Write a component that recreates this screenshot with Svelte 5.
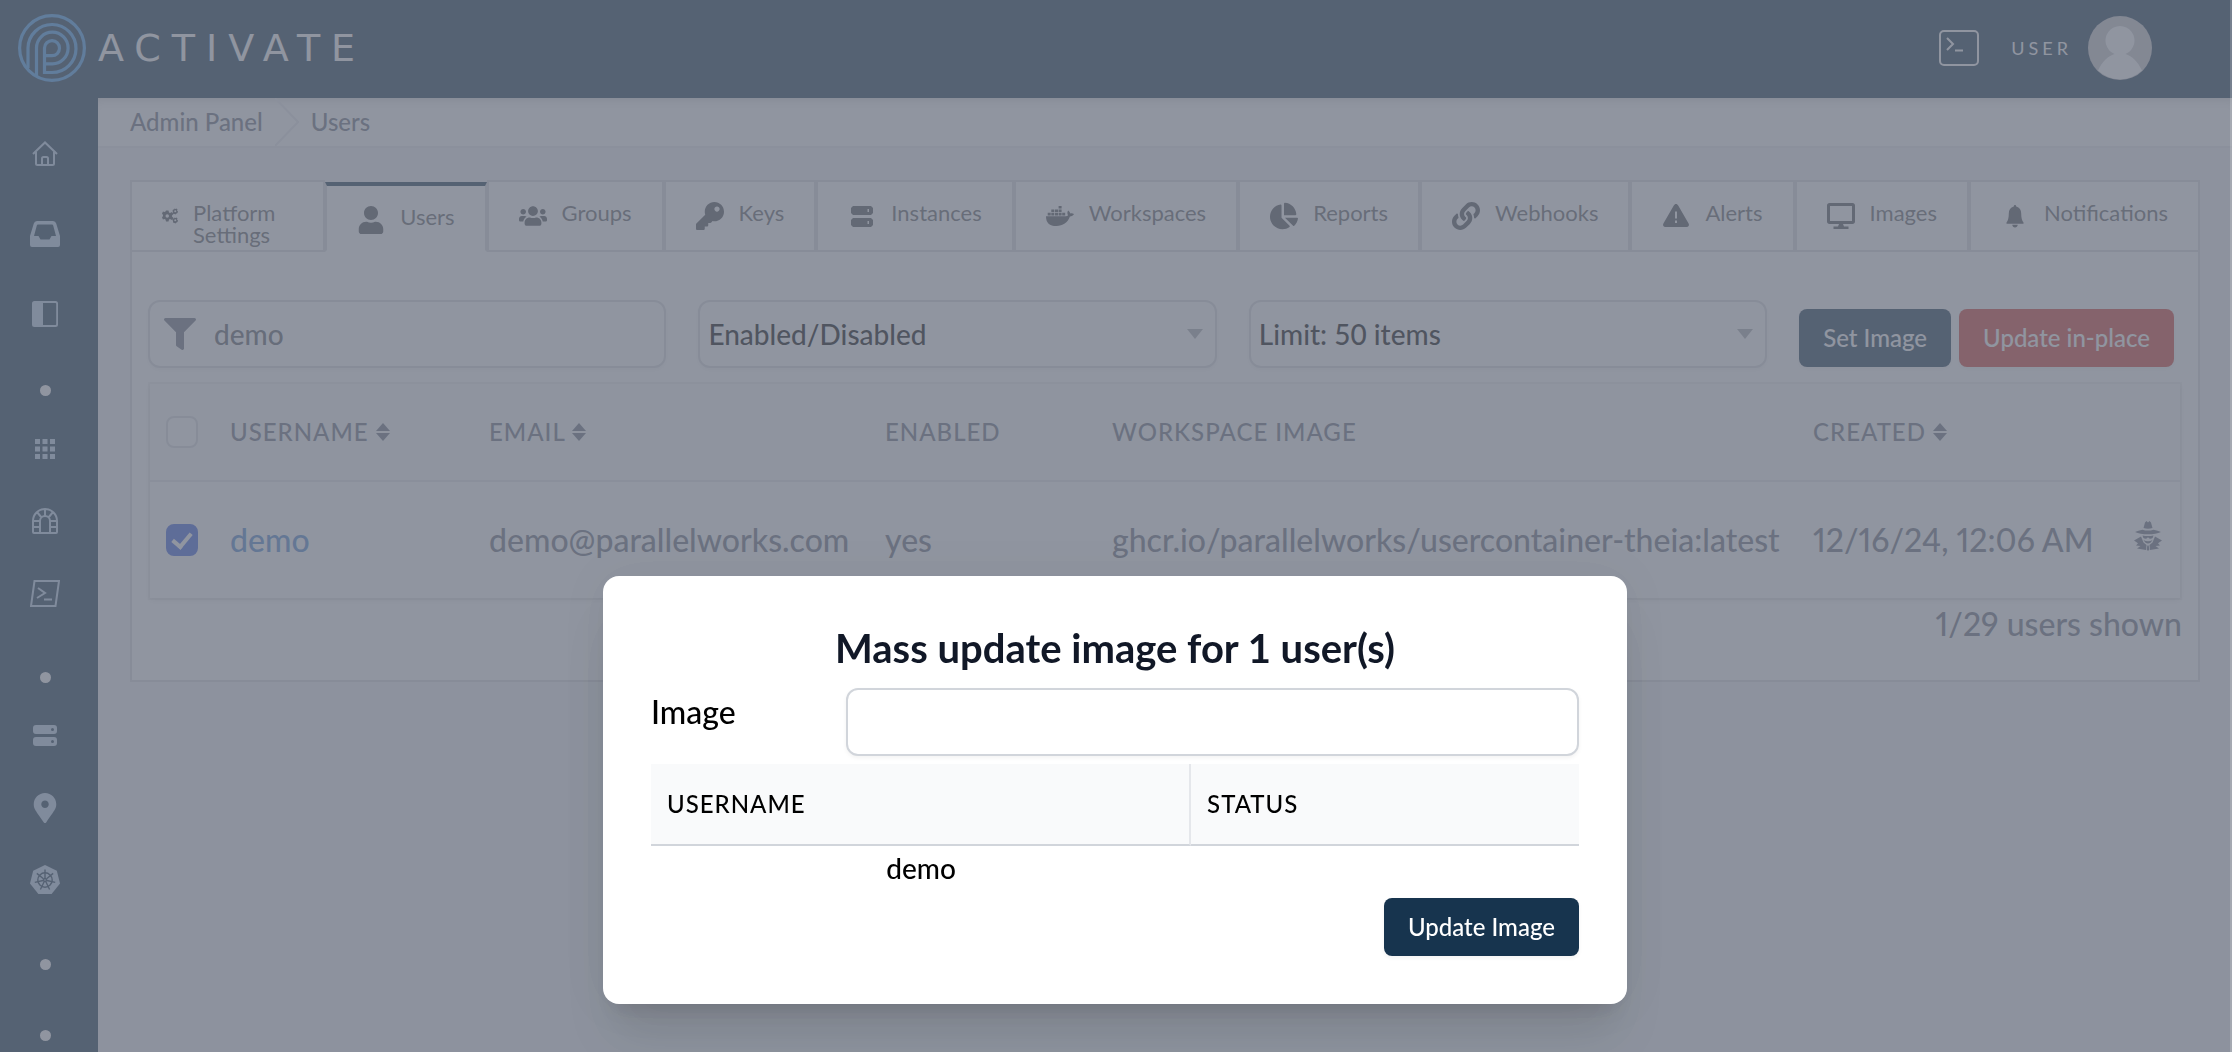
<script lang="ts">
	type Tab = {
		id: string;
		label: string;
		viewBox: string;
		path: string;
	};

	type User = {
		username: string;
		email: string;
		enabled: boolean;
		image: string;
		created: string;
		selected: boolean;
	};

	const tabs: Tab[] = [
		{
			id: 'platform',
			label: 'Platform Settings',
			viewBox: '0 0 32 32',
			path: 'M8 5h5l1 4 2 1 4-2 3 4-3 3v2l3 3-3 4-4-2-2 1-1 4H8l-1-4-2-1-3 1-2-4 2-3v-2l-2-3 2-4 3 1 2-1zM10.500 12.500a3.500 3.500 0 1 0 0 7 3.500 3.500 0 0 0 0-7zM25 1l2 1 2-1 2 2-1 2 2 2-1 3-2 1-2 2-2-1-3-1V8l-1-2 1-3h2zM26.500 4.500a2 2 0 1 0 0 4 2 2 0 0 0 0-4zM25 19l2 1 2-1 2 2-1 2 2 2-1 3-2 1-2 2-2-1-3-1v-3l-1-2 1-3h2zM26.500 22.500a2 2 0 1 0 0 4 2 2 0 0 0 0-4z'
		},
		{
			id: 'users',
			label: 'Users',
			viewBox: '0 0 448 512',
			path: 'M224 256c70.7 0 128-57.3 128-128S294.7 0 224 0 96 57.3 96 128s57.3 128 128 128zm89.6 32h-16.7c-22.2 10.2-46.9 16-72.9 16s-50.6-5.8-72.9-16h-16.7C60.2 288 0 348.2 0 422.4V464c0 26.5 21.5 48 48 48h352c26.5 0 48-21.5 48-48v-41.6c0-74.2-60.2-134.4-134.4-134.4z'
		},
		{
			id: 'groups',
			label: 'Groups',
			viewBox: '0 0 640 512',
			path: 'M96 224c35.3 0 64-28.7 64-64s-28.7-64-64-64-64 28.7-64 64 28.7 64 64 64zm448 0c35.3 0 64-28.7 64-64s-28.7-64-64-64-64 28.7-64 64 28.7 64 64 64zm32 32h-64c-17.6 0-33.5 7.1-45.1 18.6 40.3 22.1 68.9 62 75.1 109.4h66c17.700 0 32-14.300 32-32v-32c0-35.300-28.700-64-64-64zm-256 0c61.900 0 112-50.100 112-112S381.900 32 320 32 208 82.100 208 144s50.100 112 112 112zm76.800 32h-8.300c-20.800 10-43.900 16-68.500 16s-47.600-6-68.500-16h-8.300C179.600 288 128 339.600 128 403.200V432c0 26.500 21.500 48 48 48h288c26.500 0 48-21.500 48-48v-28.800c0-63.600-51.600-115.200-115.200-115.200zm-223.700-13.400C161.500 263.100 145.600 256 128 256H64c-35.300 0-64 28.700-64 64v32c0 17.700 14.300 32 32 32h65.900c6.300-47.400 34.900-87.300 75.200-109.400z'
		},
		{
			id: 'keys',
			label: 'Keys',
			viewBox: '0 0 512 512',
			path: 'M512 176c0 97.200-78.800 176-176 176-11.220 0-22.190-1.060-32.830-3.070l-24.010 27.010A24 24 0 0 1 261.220 384H224v40c0 13.250-10.750 24-24 24h-40v40c0 13.250-10.750 24-24 24H24c-13.250 0-24-10.750-24-24v-78.060c0-6.360 2.530-12.470 7.030-16.970l161.800-161.800C163.100 213.800 160 195.270 160 176 160 78.800 238.800 0 336 0c97.490 0 176 78.510 176 176zM336 128c0 26.510 21.490 48 48 48s48-21.490 48-48-21.490-48-48-48-48 21.490-48 48z'
		},
		{
			id: 'instances',
			label: 'Instances',
			viewBox: '0 0 28 28',
			path: 'M5 4h18l2 2v5l-2 2H5l-2-2V6zM19.500 7h1.500v3h-1.500zM5 16h18l2 2v5l-2 2H5l-2-2v-5zM19.500 19h1.500v3h-1.500z'
		},
		{
			id: 'workspaces',
			label: 'Workspaces',
			viewBox: '0 0 28 28',
			path: 'M12.600 4h3v2.600h-3zM5.300 7.400h3V10h-3zM9 7.400h3V10H9zM12.600 7.400h3V10h-3zM1.700 10.800h3v2.600h-3zM5.300 10.800h3v2.600h-3zM9 10.800h3v2.600H9zM12.600 10.800h3v2.600h-3zM16.200 10.800h3v2.600h-3zM0 14.200h19c1.500 0 2.500-.4 3-1-.9-1.500-.8-3.300.2-4.700 1.200.8 1.900 1.900 2 3 1.300-.3 2.700-.1 3.800.6-.8 1.600-2.200 2.500-4.100 2.500C21.600 21 16.900 24 10.500 24 3.500 24 0 21 0 14.200z'
		},
		{
			id: 'reports',
			label: 'Reports',
			viewBox: '0 0 544 512',
			path: 'M527.800 288H290.500l158 158c6 6 16 6.500 22.200.7 38.700-36.500 65.300-85.600 73.100-140.900 1.400-9.400-6.500-17.800-16-17.800zm-15.800-64.800C503.700 103.700 408.300 8.300 288.800 0 279.700-.6 272 7.100 272 16.200V240h223.800c9.100 0 16.800-7.700 16.200-16.800zM224 288V50.700c0-9.500-8.400-17.400-17.800-16C87 51.500-4.100 155.600.1 280.400 4.500 408.500 114.800 513.600 243 512c50.400-.6 97-16.900 135.300-44 7.900-5.600 8.400-17.300 1.600-24.100L224 288z'
		},
		{
			id: 'webhooks',
			label: 'Webhooks',
			viewBox: '0 0 512 512',
			path: 'M326.600 185.400c59.800 59.800 59 155.700.4 214.600l-67.600 67.600c-59.200 59.200-155.600 59.200-214.900 0-59.300-59.300-59.300-155.700 0-215l37.100-37.100c9.800-9.800 26.800-3.300 27.300 10.600.6 17.700 3.800 35.500 9.700 52.700 2 5.800.6 12.300-3.800 16.600l-13.100 13.100c-28 28-28.900 73.700-1.100 102 28 28.600 74 28.700 102.300.5l67.200-67.200c28.200-28.200 28-73.800 0-101.800-3.700-3.700-7.400-6.600-10.300-8.600a16 16 0 0 1-7-12.600c-.4-10.600 3.400-21.500 11.700-29.800l21.100-21.100c5.500-5.500 14.200-6.200 20.600-1.700 7.200 5 14.100 10.800 20.400 17.200zM467.500 44.400c-59.200-59.200-155.600-59.200-214.900 0L185 112c-58.600 58.900-59.400 154.800.4 214.600 6.300 6.400 13.200 12.200 20.500 17.200 6.400 4.500 15.100 3.800 20.600-1.700l21-21.100c8.400-8.300 12.100-19.200 11.700-29.800a16 16 0 0 0-6.900-12.600c-2.900-2-6.700-4.900-10.400-8.600-28-28-28.200-73.600 0-101.800l67.200-67.200c28.300-28.200 74.300-28 102.400.5 27.700 28.300 26.900 74-1.200 102l-13 13.100c-4.400 4.300-5.800 10.800-3.800 16.600 5.800 17.200 9 35 9.700 52.700.5 13.900 17.400 20.400 27.300 10.600l37-37.100c59.300-59.300 59.300-155.700 0-215z'
		},
		{
			id: 'alerts',
			label: 'Alerts',
			viewBox: '0 0 28 28',
			path: 'M14 2c1 0 1.700.6 2.200 1.500l10.400 18c1 1.900-.2 3.500-2.100 3.500h-21c-1.900 0-3.100-1.600-2.100-3.500l10.400-18C12.300 2.600 13 2 14 2zM13 9.500v7h2v-7zM13 18.500v2.500h2v-2.500z'
		},
		{
			id: 'images',
			label: 'Images',
			viewBox: '0 0 28 28',
			path: 'M2.500 1h23C27 1 28 2 28 3.500v16c0 1.500-1 2.500-2.500 2.500h-23C1 22 0 21 0 19.500v-16C0 2 1 1 2.500 1zM3 4v15h22V4zM12 22h4l1 2.500h4.500V27h-15v-2.500H11z'
		},
		{
			id: 'notifications',
			label: 'Notifications',
			viewBox: '0 0 28 28',
			path: 'M14 3c.8 0 1.200.6 1.200 1.500 3.400.8 5 3.600 5 7 0 4.500.8 7 2.300 9v1.200h-17v-1.200c1.500-2 2.300-4.500 2.300-9 0-3.400 1.600-6.200 5-7C12.800 3.600 13.200 3 14 3zM11.200 22.800h5.600c-.2 1.600-1.300 2.700-2.800 2.700s-2.600-1.100-2.800-2.700z'
		}
	];

	let users = $state<User[]>([
		{
			username: 'demo',
			email: 'demo@parallelworks.com',
			enabled: true,
			image: 'ghcr.io/parallelworks/usercontainer-theia:latest',
			created: '12/16/24, 12:06 AM',
			selected: true
		}
	]);

	const totalUsers = 29;

	let activeTab = $state('users');
	let filter = $state('demo');
	let newImage = $state('');

	const selectedUsers = $derived(users.filter((user) => user.selected));

	function toggleAll(event: Event) {
		const checked = (event.currentTarget as HTMLInputElement).checked;
		users.forEach((user) => (user.selected = checked));
	}

	function updateImages() {
		selectedUsers.forEach((user) => (user.image = newImage));
	}
</script>

{#snippet sortIcon()}
	<svg class="sort" viewBox="0 0 14 18" aria-hidden="true">
		<path d="M7 0l7 8H0zM7 18l-7-8h14z" />
	</svg>
{/snippet}

<div class="app">
	<header class="topbar">
		<a class="brand" href="#home" aria-label="Activate home">
			<svg class="logo" viewBox="0 0 68 68" aria-hidden="true">
				<circle cx="34" cy="34" r="32.400" />
				<path d="M10 54V34a24 24 0 1 1 24 24.500H26.500" />
				<path d="M18.500 62V34a15.800 15.800 0 1 1 15.500 15.800h-7" />
				<path d="M34 41.700h-7M26.500 60V34a7.500 7.500 0 1 1 7.500 7.700" />
			</svg>
			<span class="wordmark">ACTIVATE</span>
		</a>
		<div class="account">
			<button type="button" class="terminal" aria-label="Open terminal">
				<svg viewBox="0 0 40 36" aria-hidden="true">
					<rect x="1" y="1" width="38" height="34" rx="4" />
					<path d="M8 8l6 6-6 6M16 20.500h8" />
				</svg>
			</button>
			<span class="account-name">USER</span>
			<svg class="avatar" viewBox="0 0 64 64" aria-hidden="true">
				<circle class="avatar-bg" cx="32" cy="32" r="32" />
				<path d="M10 54.500C14 46 20 40 26.500 38a14.500 14.500 0 1 1 11 0C44 40 50 46 54 54.500A32 32 0 0 1 10 54.500z" />
			</svg>
		</div>
	</header>

	<div class="body">
		<nav class="sidebar" aria-label="Main">
			<div class="primary">
				<a href="#home" aria-label="Home">
					<svg viewBox="0 0 30 30" class="line">
						<path d="M3 15L15 3.500 27 15M6 13v11.500q0 1.500 1.500 1.500h15q1.500 0 1.500-1.500V13M12 26v-6.500q0-1.500 1.500-1.500h3q1.500 0 1.500 1.500V26" />
					</svg>
				</a>
				<a href="#inbox" aria-label="Inbox">
					<svg viewBox="0 0 30 30">
						<path fill-rule="evenodd" d="M7 2h16q2.500 0 3.200 2.500L30 17v9q0 2-2 2H2q-2 0-2-2v-9L3.800 4.500Q4.500 2 7 2zM8 5.500q-1 0-1.200 1L4 17h4.500l2 3.500h9l2-3.500H26L23.200 6.500q-.2-1-1.200-1z" />
					</svg>
				</a>
				<a href="#panel" aria-label="Side panel">
					<svg viewBox="0 0 30 30">
						<path fill-rule="evenodd" d="M4.500 2h21q2.500 0 2.500 2.500v21q0 2.500-2.500 2.500h-21Q2 28 2 25.500v-21Q2 2 4.500 2zM13 4v22h12.500q.7 0 .7-.7V4.700q0-.7-.7-.7z" />
					</svg>
				</a>
			</div>
			<span class="dot"></span>
			<div class="group">
				<a href="#apps" aria-label="Apps">
					<svg viewBox="0 0 30 30">
						<path d="M5 5h5v5H5zM12.500 5h5v5h-5zM20 5h5v5h-5zM5 12.500h5v5H5zM12.500 12.500h5v5h-5zM20 12.500h5v5h-5zM5 20h5v5H5zM12.500 20h5v5h-5zM20 20h5v5h-5z" />
					</svg>
				</a>
				<a href="#gateway" aria-label="Gateway">
					<svg viewBox="0 0 30 30" class="line">
						<path d="M3 26V15a12 12 0 0 1 24 0v11q0 1-1 1H4q-1 0-1-1zM10 27V15a5 5 0 0 1 10 0v12M3 15h7M3 21h7M20 15h7M20 21h7M15 3v7M7 6l4.500 5.500M23 6l-4.500 5.500" />
					</svg>
				</a>
				<a href="#shell" aria-label="Shell">
					<svg viewBox="0 0 30 30" class="line">
						<path d="M4.500 3H29l-3.500 25H1zM8 10l7 5-8 5M14 21.500h8" />
					</svg>
				</a>
			</div>
			<span class="dot"></span>
			<div class="group">
				<a href="#servers" aria-label="Servers">
					<svg viewBox="0 0 30 30">
						<path fill-rule="evenodd" d="M6 4h18q3 0 3 3v3q0 3-3 3H6q-3 0-3-3V7q0-3 3-3zM22.500 7a1.500 1.500 0 1 0 0 3 1.500 1.500 0 0 0 0-3zM6 16h18q3 0 3 3v3q0 3-3 3H6q-3 0-3-3v-3q0-3 3-3zM22.500 19a1.500 1.500 0 1 0 0 3 1.500 1.500 0 0 0 0-3z" />
					</svg>
				</a>
				<a href="#locations" aria-label="Locations">
					<svg viewBox="0 0 384 512">
						<path fill-rule="evenodd" d="M172.300 501.700C27 291 0 269.400 0 192 0 86 86 0 192 0s192 86 192 192c0 77.400-27 99-172.300 309.700-9.500 13.800-29.900 13.800-39.400 0zM192 256c35 0 64-29 64-64s-29-64-64-64-64 29-64 64 29 64 64 64z" />
					</svg>
				</a>
				<a href="#kubernetes" aria-label="Kubernetes">
					<svg viewBox="0 0 30 30">
						<path d="M15 0l11.800 5.700L30 18.500 21.600 29H8.400L0 18.500 3.200 5.700z" />
						<g class="helm">
							<circle cx="15" cy="15" r="7.200" />
							<circle cx="15" cy="15" r="1.500" />
							{#each [0, 51, 103, 154, 206, 257, 309] as angle (angle)}
								<path d="M15 13V4.500" transform="rotate({angle} 15 15)" />
							{/each}
						</g>
					</svg>
				</a>
			</div>
			<span class="dot"></span>
			<span class="dot last"></span>
		</nav>

		<div class="content">
			<nav class="breadcrumbs" aria-label="Breadcrumb">
				<a href="#admin">Admin Panel</a>
				<svg viewBox="0 0 24 48" aria-hidden="true"><path d="M0 0l23 24L0 48" /></svg>
				<a href="#users">Users</a>
			</nav>

			<main>
				<div class="tabs" role="tablist">
					{#each tabs as tab (tab.id)}
						<button
							type="button"
							role="tab"
							class:active={tab.id === activeTab}
							class:wrap={tab.id === 'platform'}
							aria-selected={tab.id === activeTab}
							onclick={() => (activeTab = tab.id)}
						>
							<svg viewBox={tab.viewBox} aria-hidden="true">
								<path fill-rule="evenodd" d={tab.path} />
							</svg>
							<span>{tab.label}</span>
						</button>
					{/each}
				</div>

				<section class="panel">
					<div class="filters">
						<label class="field search">
							<svg viewBox="0 0 512 512" aria-hidden="true">
								<path d="M488 0H24C2.700 0-8 25.900 7 41l185 185v206c0 7.800 3.800 15.200 10.200 19.700l80 56c15.800 11 37.800-.2 37.800-19.700V226L505 41c15-15.100 4.300-41-17-41z" />
							</svg>
							<input type="text" aria-label="Filter users" bind:value={filter} />
						</label>
						<div class="field">
							<select aria-label="Status">
								<option>Enabled/Disabled</option>
								<option>Enabled</option>
								<option>Disabled</option>
							</select>
						</div>
						<div class="field">
							<select aria-label="Limit">
								<option>Limit: 50 items</option>
								<option>Limit: 100 items</option>
							</select>
						</div>
						<div class="actions">
							<button type="button" class="btn">Set Image</button>
							<button type="button" class="btn danger">Update in-place</button>
						</div>
					</div>

					<table class="users">
						<colgroup>
							<col class="col-icon" />
							<col class="col-username" />
							<col class="col-email" />
							<col class="col-enabled" />
							<col class="col-image" />
							<col class="col-created" />
							<col class="col-icon" />
						</colgroup>
						<thead>
							<tr>
								<th><input type="checkbox" aria-label="Select all" onchange={toggleAll} /></th>
								<th>USERNAME {@render sortIcon()}</th>
								<th>EMAIL {@render sortIcon()}</th>
								<th>ENABLED</th>
								<th>WORKSPACE IMAGE</th>
								<th>CREATED {@render sortIcon()}</th>
								<th></th>
							</tr>
						</thead>
						<tbody>
							{#each users as user (user.username)}
								<tr>
									<td>
										<input
											type="checkbox"
											aria-label="Select {user.username}"
											bind:checked={user.selected}
										/>
									</td>
									<td><a href="#{user.username}">{user.username}</a></td>
									<td>{user.email}</td>
									<td>{user.enabled ? 'yes' : 'no'}</td>
									<td>{user.image}</td>
									<td>{user.created}</td>
									<td>
										<button type="button" class="impersonate" aria-label="Impersonate">
											<svg viewBox="0 0 28 30" aria-hidden="true">
												<path d="M9.500 7L11 1.500 12.500 0 14 1.500 15.500 0 17 1.500 18.500 7q-4.500 1.500-9 0z" />
												<path d="M1 11q3-1.500 7.500-2.300 5.500 1.800 11 0Q24 9.500 27 11q-5 2.300-13 2.300T1 11z" />
												<path d="M8.500 14.500q5.500 1 11 0-.3 3-2.600 3.300-1.700 0-2.900-1.600-1.200 1.600-2.900 1.600-2.300-.3-2.600-3.300z" />
												<path d="M9.500 19q2 1.200 4.500 1.200t4.500-1.200q-2 3.500-4.500 3.500T9.500 19z" />
												<path d="M7 15.500l2.500 6 3 2.500-.5 5-9-1.500 3.500-2.500-4.500-.5 2-2.200-4-2.800zM21 15.500l-2.500 6-3 2.500.5 5 9-1.500-3.500-2.500 4.500-.5-2-2.200 4-2.800z" />
												<path d="M13.300 24.500h1.400l.6 4L14 30l-1.300-1.500z" />
											</svg>
										</button>
									</td>
								</tr>
							{/each}
						</tbody>
					</table>
					<p class="count">{users.length}/{totalUsers} users shown</p>
				</section>
			</main>
		</div>
	</div>

	<div class="overlay">
		<div class="modal" role="dialog" aria-modal="true" aria-labelledby="modal-title">
			<h2 id="modal-title">Mass update image for {selectedUsers.length} user(s)</h2>
			<div class="form-row">
				<label for="image">Image</label>
				<input id="image" type="text" bind:value={newImage} />
			</div>
			<table>
				<thead>
					<tr>
						<th class="name">USERNAME</th>
						<th>STATUS</th>
					</tr>
				</thead>
				<tbody>
					{#each selectedUsers as user (user.username)}
						<tr>
							<td>{user.username}</td>
							<td></td>
						</tr>
					{/each}
				</tbody>
			</table>
			<button type="button" class="btn" onclick={updateImages}>Update Image</button>
		</div>
	</div>
</div>

<style>
	:global(body) {
		margin: 0;
		background: #f3f4f6;
	}

	.app {
		--navy: #17344e;
		--border: #d9dbdf;
		--muted: #6b7280;
		display: flex;
		flex-direction: column;
		min-height: 100vh;
		font-family: Lato, 'Liberation Sans', sans-serif;
		font-size: 32px;
		font-weight: 500;
		line-height: 48px;
		color: #000;
	}

	.app :global(*) {
		box-sizing: border-box;
	}

	a {
		color: inherit;
		text-decoration: none;
	}

	button,
	input,
	select {
		font: inherit;
		color: inherit;
	}

	button {
		cursor: pointer;
	}

	/* top bar */

	.topbar {
		display: flex;
		align-items: center;
		justify-content: space-between;
		height: 98px;
		padding: 0 80px 2px 18px;
		background: var(--navy);
		color: #fff;
	}

	.brand {
		display: flex;
		align-items: center;
		gap: 12px;
	}

	.logo {
		width: 68px;
		height: 68px;
		fill: none;
		stroke: #469fee;
		stroke-width: 3.2;
	}

	.wordmark {
		font-family: 'DejaVu Sans', sans-serif;
		font-size: 38px;
		font-weight: 400;
		letter-spacing: 11px;
	}

	.account {
		display: flex;
		align-items: center;
	}

	.terminal {
		display: flex;
		margin-right: 32px;
		padding: 0;
		border: 0;
		background: none;
	}

	.terminal svg {
		width: 40px;
		height: 36px;
		fill: none;
		stroke: currentColor;
		stroke-width: 2;
	}

	.account-name {
		margin-right: 16px;
		font-size: 18px;
		font-weight: 400;
		letter-spacing: 4px;
	}

	.avatar {
		width: 64px;
		height: 64px;
		fill: #fff;
	}

	.avatar-bg {
		fill: #c9c9cc;
	}

	/* sidebar */

	.body {
		display: flex;
		flex: 1;
	}

	.sidebar {
		display: flex;
		flex-direction: column;
		flex: none;
		width: 98px;
		padding: 16px 8px 0 0;
		background: var(--navy);
		color: #c0d8ee;
	}

	.sidebar a {
		display: flex;
		align-items: center;
		justify-content: center;
		height: 72px;
	}

	.sidebar .primary {
		margin-bottom: -12px;
	}

	.sidebar .primary a {
		height: 80px;
	}

	.sidebar svg {
		width: 30px;
		height: 30px;
		fill: currentColor;
	}

	.sidebar svg.line {
		fill: none;
		stroke: currentColor;
		stroke-width: 2;
	}

	.helm {
		fill: none;
		stroke: var(--navy);
		stroke-width: 1.4;
	}

	.dot {
		align-self: center;
		width: 11px;
		height: 11px;
		margin: 43px 0 17px;
		border-radius: 50%;
		background: #fff;
	}

	.dot.last {
		margin-bottom: 0;
	}

	/* page */

	.content {
		flex: 1;
		min-width: 0;
	}

	.breadcrumbs {
		display: flex;
		align-items: center;
		gap: 12px;
		height: 50px;
		padding-left: 32px;
		border-bottom: 2px solid #e9eaee;
		background: #fff;
		box-shadow: inset 0 8px 12px -8px rgba(0, 0, 0, 0.25);
		color: var(--muted);
		font-size: 24px;
	}

	.breadcrumbs svg {
		width: 24px;
		height: 48px;
		fill: none;
		stroke: #e9eaee;
		stroke-width: 2;
	}

	main {
		padding: 32px;
	}

	.tabs {
		display: flex;
	}

	.tabs button {
		display: flex;
		flex: none;
		align-items: flex-start;
		gap: 15px;
		height: 72px;
		padding: 20px 30px 0;
		border: 2px solid var(--border);
		background: #fff;
		color: #606266;
		font-size: 22px;
		font-weight: 400;
		line-height: 22px;
		text-align: left;
	}

	.tabs button.active {
		height: 70px;
		margin-top: 2px;
		border-top: 4px solid var(--navy);
		border-bottom-color: #fff;
	}

	.tabs button.wrap {
		flex: 1 1 0;
		min-width: 0;
	}

	.tabs svg {
		flex: none;
		width: 28px;
		height: 28px;
		fill: #4c4f55;
	}

	.tabs .wrap svg {
		width: 16px;
	}

	.panel {
		padding: 48px 16px 32px;
		border: 2px solid var(--border);
		border-top: 0;
		background: #fff;
	}

	.filters {
		display: grid;
		grid-template-columns: repeat(3, 1fr) auto;
		align-items: end;
		gap: 32px;
		margin-bottom: 16px;
	}

	.field {
		position: relative;
		display: flex;
		align-items: center;
		height: 68px;
		border: 2px solid var(--border);
		border-radius: 12px;
		background: #fff;
		box-shadow: 0 2px 4px rgba(0, 0, 0, 0.05);
		font-size: 28px;
	}

	.field.search {
		gap: 18px;
		padding-left: 14px;
	}

	.search svg {
		flex: none;
		width: 32px;
		height: 32px;
		fill: var(--muted);
	}

	.search input {
		flex: 1;
		min-width: 0;
		padding: 0;
		border: 0;
		outline: 0;
		background: none;
		color: #5b6068;
	}

	.field select {
		width: 100%;
		height: 100%;
		padding: 0 8px;
		border: 0;
		background: none;
		appearance: none;
	}

	.field:has(select)::after {
		position: absolute;
		right: 12px;
		border: 8px solid transparent;
		border-top: 10px solid #a9abb0;
		border-bottom: 0;
		content: '';
		pointer-events: none;
	}

	.actions {
		display: flex;
		gap: 8px;
		padding: 0 8px 1px 0;
	}

	.btn {
		height: 58px;
		padding: 0 24px;
		border: 0;
		border-radius: 8px;
		background: var(--navy);
		box-shadow: 0 2px 4px rgba(0, 0, 0, 0.05);
		color: #fff;
		font-size: 24px;
		line-height: 32px;
	}

	.btn.danger {
		background: #d13b33;
	}

	table {
		border-spacing: 0;
		table-layout: fixed;
	}

	th {
		font-size: 24px;
		font-weight: 500;
		letter-spacing: 1px;
		text-align: left;
	}

	.users {
		width: calc(100% - 4px);
		margin: 0 2px;
		box-shadow:
			0 0 0 2px rgba(0, 0, 0, 0.05),
			0 2px 6px rgba(0, 0, 0, 0.1);
		color: var(--muted);
		font-variant-numeric: proportional-nums;
		white-space: nowrap;
	}

	.users th {
		height: 98px;
		padding: 0 16px;
		border-bottom: 2px solid #e5e7eb;
		background: #f9fafb;
	}

	.users td {
		height: 116px;
		padding: 0 16px;
	}

	.users td a {
		color: #5088d0;
	}

	.col-icon {
		width: 64px;
	}

	.col-username {
		width: 259px;
	}

	.col-email {
		width: 396px;
	}

	.col-enabled {
		width: 227px;
	}

	.col-image {
		width: 701px;
	}

	.col-created {
		width: 319px;
	}

	.users input {
		display: grid;
		place-items: center;
		width: 32px;
		height: 32px;
		margin: 0;
		border: 2px solid var(--border);
		border-radius: 8px;
		background: #fff;
		appearance: none;
	}

	.users input:checked {
		border-color: #3b5fe0;
		background: #3b5fe0;
	}

	.users input:checked::after {
		width: 8px;
		height: 15px;
		margin-bottom: 4px;
		border: solid #fff;
		border-width: 0 4px 4px 0;
		content: '';
		transform: rotate(40deg);
	}

	.sort {
		width: 14px;
		height: 18px;
		fill: currentColor;
	}

	.impersonate {
		display: flex;
		padding: 0 0 8px 2px;
		border: 0;
		background: none;
	}

	.impersonate svg {
		width: 28px;
		height: 30px;
		fill: currentColor;
	}

	.count {
		margin: 2px 0 0;
		color: var(--muted);
		font-variant-numeric: proportional-nums;
		text-align: right;
	}

	/* modal */

	.overlay {
		position: fixed;
		inset: 0;
		display: flex;
		align-items: flex-end;
		justify-content: center;
		padding: 48px;
		border-right: 2px solid rgba(255, 255, 255, 0.2);
		background: rgba(107, 114, 128, 0.75);
	}

	.modal {
		display: flex;
		flex-direction: column;
		width: 1024px;
		max-width: 100%;
		padding: 48px;
		border-radius: 16px;
		background: #fff;
		box-shadow:
			0 40px 50px -10px rgba(0, 0, 0, 0.1),
			0 16px 20px -12px rgba(0, 0, 0, 0.1),
			0 0 48px rgba(0, 0, 0, 0.06);
	}

	h2 {
		margin: 0 0 16px;
		color: #111827;
		font-size: 40px;
		font-weight: 700;
		line-height: 48px;
		text-align: center;
	}

	.form-row {
		display: grid;
		grid-template-columns: 1fr 4fr;
		gap: 12px;
		margin-bottom: 8px;
	}

	.form-row input {
		width: 100%;
		height: 68px;
		padding: 0 16px;
		border: 2px solid #d1d5db;
		border-radius: 12px;
		background: #fff;
		box-shadow: 0 2px 4px rgba(0, 0, 0, 0.05);
		font-size: 28px;
	}

	.modal table {
		width: 100%;
		margin-bottom: 8px;
	}

	.modal th {
		height: 82px;
		padding: 0 16px;
		border-bottom: 2px solid #d1d5db;
		background: #f9fafb;
	}

	.modal th.name {
		width: 58.2%;
		border-right: 2px solid #e5e7eb;
	}

	.modal td {
		height: 44px;
		padding: 0;
		font-size: 28px;
		line-height: 44px;
		text-align: center;
	}

	.modal .btn {
		align-self: flex-end;
	}
</style>
